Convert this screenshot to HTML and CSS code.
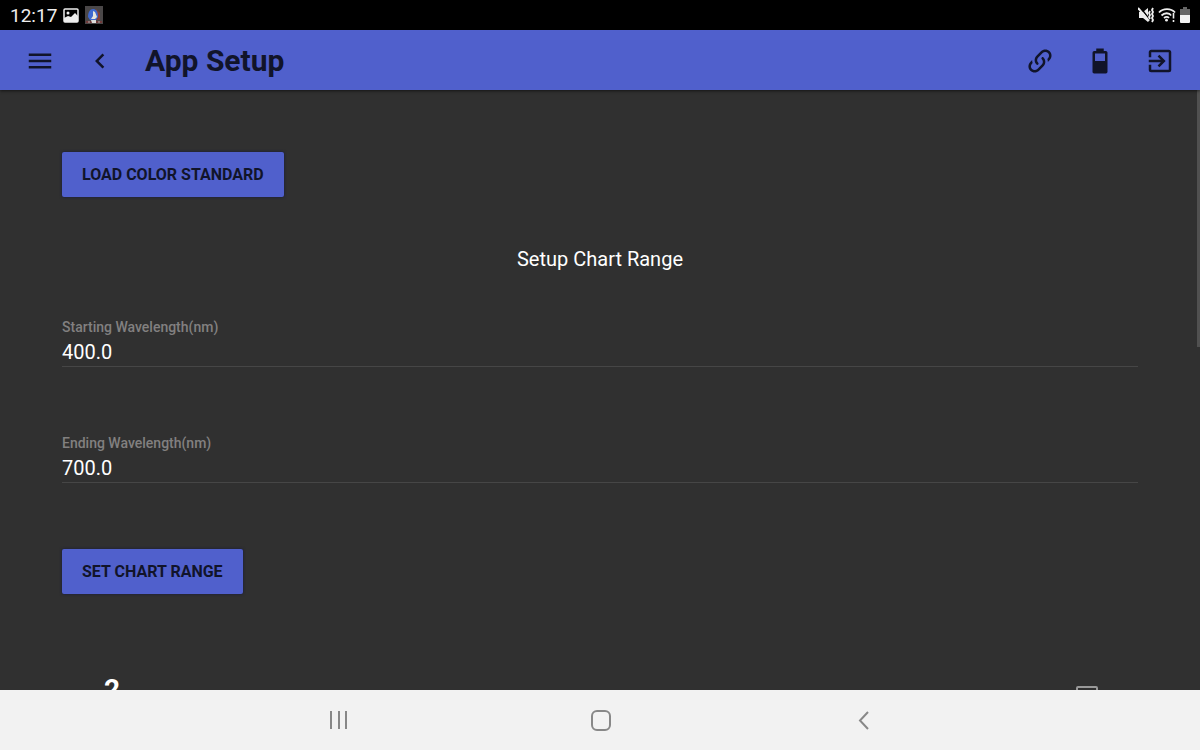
FILE: index.html
```html
<!DOCTYPE html>
<html lang="en">
<head>
    <meta charset="UTF-8">
    <meta name="viewport" content="width=device-width, initial-scale=1.0">
    <title>App Setup</title>
    <link rel="stylesheet" href="styles.css">
</head>
<body>
    <div class="status-bar">
        <span class="clock">12:17</span>
        <svg class="status-icon" width="16" height="15" viewBox="0 0 16 15">
            <rect x="1" y="1" width="14" height="13" rx="1" fill="none" stroke="#eee" stroke-width="1.5"/>
            <circle cx="5" cy="5" r="1.5" fill="#eee"/>
            <path d="M1 10l4-2 3 1 4-4 3 3v6H1z" fill="#eee"/>
        </svg>
        <svg class="status-icon app-icon" width="18" height="18" viewBox="0 0 18 18">
            <rect width="18" height="18" fill="#4a4748"/>
            <path d="M11 3l4 4v7h-4z" fill="#843f35"/>
            <path d="M3 11c0-5 2-8 5-8s5 2 5 8l-2 3H5z" fill="#3f68d0"/>
            <path d="M8 5l2 1 2 5-2 2H6l2-3z" fill="#e8e5dc"/>
            <path d="M1 15h16v2H1z" fill="#713b3b"/>
            <path d="M3 16h2M7 16h4M13 16h2" stroke="#aaa" stroke-width="1"/>
            <path d="M6 14h5v3H7z" fill="#ddd"/>
        </svg>
        <div class="status-right">
            <svg width="17" height="16" viewBox="0 0 17 16">
                <path d="M1 5h4l5-4v14l-5-4H1z" fill="#eee"/>
                <path d="M2 0l10 13" stroke="#000" stroke-width="1.5"/>
                <path d="M0 1l11 13" stroke="#eee" stroke-width="2"/>
                <path d="M12 4l-1 2 1 2-1 2 1 2M15 1l-1 2 1 2-1 2 1 2-1 2 1 2-1 2" fill="none" stroke="#eee" stroke-width="1.8"/>
            </svg>
            <svg width="18" height="16" viewBox="0 0 18 16">
                <path d="M1 5.5c4-4.500 12-4.500 16 0M3.500 8.500c3-3 7.500-3 10 0M6 11c2-1.600 3.500-1.600 5 0" fill="none" stroke="#eee" stroke-width="1.8"/>
                <circle cx="8.500" cy="13.200" r="1.400" fill="#eee"/>
                <path d="M15.500 6v10" stroke="#000" stroke-width="4"/>
                <path d="M15.500 6v5.500M15.500 13v2" stroke="#eee" stroke-width="1.600"/>
            </svg>
            <svg width="12" height="16" viewBox="0 0 12 16">
                <path d="M4 0h4v2h3v6H1V2h3z" fill="#666"/>
                <path d="M1 8h10v7q0 1-1 1H2q-1 0-1-1z" fill="#f2f2f2"/>
            </svg>
        </div>
    </div>
    <header class="toolbar">
        <button class="icon-button" aria-label="Menu">
            <svg viewBox="0 0 24 24"><path d="M3 6h18v2H3zM3 11h18v2H3zM3 16h18v2H3z"/></svg>
        </button>
        <button class="icon-button" aria-label="Back">
            <svg viewBox="0 0 24 24"><path d="M15.410 16.580L10.830 12l4.580-4.590L14 6l-6 6 6 6z"/></svg>
        </button>
        <h1 class="title">App Setup</h1>
        <button class="icon-button" aria-label="Connection">
            <svg viewBox="0 0 24 24"><path d="M10.590,13.410C11,13.800 11,14.440 10.590,14.830C10.200,15.220 9.560,15.220 9.170,14.830C7.220,12.880 7.220,9.710 9.170,7.760V7.760L12.710,4.220C14.660,2.270 17.830,2.270 19.780,4.220C21.730,6.170 21.730,9.340 19.780,11.290L18.290,12.780C18.300,11.960 18.170,11.140 17.890,10.360L18.360,9.880C19.540,8.710 19.540,6.810 18.360,5.640C17.190,4.460 15.290,4.460 14.120,5.640L10.590,9.170C9.410,10.340 9.410,12.240 10.590,13.410M13.410,9.170C13.800,8.780 14.440,8.780 14.830,9.170C16.780,11.120 16.780,14.290 14.830,16.240V16.240L11.290,19.780C9.340,21.730 6.170,21.730 4.220,19.780C2.270,17.830 2.270,14.660 4.220,12.710L5.710,11.220C5.700,12.040 5.830,12.860 6.110,13.650L5.640,14.120C4.460,15.290 4.460,17.190 5.640,18.360C6.810,19.540 8.710,19.540 9.880,18.360L13.410,14.830C14.590,13.660 14.590,11.760 13.410,10.590C13,10.200 13,9.560 13.410,9.170Z"/></svg>
        </button>
        <button class="icon-button" aria-label="Battery">
            <svg viewBox="0 0 24 24"><path d="M16,12H8V6H16M16.670,4H15V2H9V4H7.330A1.330,1.330 0 0,0 6,5.330V20.670C6,21.400 6.600,22 7.330,22H16.670A1.330,1.330 0 0,0 18,20.670V5.330C18,4.600 17.400,4 16.670,4Z"/></svg>
        </button>
        <button class="icon-button" aria-label="Exit">
            <svg viewBox="0 0 24 24"><path d="M19,3H5C3.890,3 3,3.890 3,5V9H5V5H19V19H5V15H3V19A2,2 0 0,0 5,21H19A2,2 0 0,0 21,19V5C21,3.890 20.100,3 19,3M10.080,15.580L11.500,17L16.500,12L11.500,7L10.080,8.410L12.670,11H3V13H12.670L10.080,15.580Z"/></svg>
        </button>
    </header>
    <main class="content">
        <button class="button">LOAD COLOR STANDARD</button>
        <h2 class="section-title">Setup Chart Range</h2>
        <div class="field">
            <label for="start">Starting Wavelength(nm)</label>
            <input id="start" type="text" value="400.0">
        </div>
        <div class="field">
            <label for="end">Ending Wavelength(nm)</label>
            <input id="end" type="text" value="700.0">
        </div>
        <button class="button">SET CHART RANGE</button>
        <div class="option-row">
            <label for="option">2</label>
            <input id="option" type="checkbox">
        </div>
        <div class="scroll-thumb"></div>
    </main>
    <nav class="nav-bar">
        <button class="nav-button" aria-label="Recent apps">
            <svg viewBox="0 0 24 24"><path d="M4 3v18M12 3v18M19 3v18"/></svg>
        </button>
        <button class="nav-button" aria-label="Home">
            <svg viewBox="0 0 24 24"><rect x="3" y="3" width="18" height="19" rx="5"/></svg>
        </button>
        <button class="nav-button" aria-label="Back">
            <svg viewBox="0 0 24 24"><path d="M17 4l-8 8.500 8 8.500"/></svg>
        </button>
    </nav>
</body>
</html>
```

FILE: styles.css
```css
* {
    box-sizing: border-box;
}
body {
    font-family: Roboto, sans-serif;
    display: flex;
    flex-direction: column;
    height: 100vh;
    margin: 0;
    background: #303030;
    color: #fff;
    overflow: hidden;
}
button {
    font-family: inherit;
    border: none;
    padding: 0;
    cursor: pointer;
}
.status-bar {
    display: flex;
    align-items: center;
    height: 30px;
    padding: 0 9px 0 10px;
    background: #000;
    flex-shrink: 0;
}
.clock {
    font-size: 19px;
    line-height: 30px;
    padding-top: 2px;
    color: #eee;
}
.status-icon {
    margin-left: 6px;
}
.status-right {
    display: flex;
    gap: 3px;
    margin-left: auto;
}
.toolbar {
    display: flex;
    align-items: center;
    height: 60px;
    padding: 2px 10px 0;
    background: #5060cc;
    color: #11142a;
    box-shadow: 0 1px 3px rgba(0, 0, 0, 0.6);
    flex-shrink: 0;
    z-index: 1;
}
.icon-button {
    display: flex;
    align-items: center;
    justify-content: center;
    width: 60px;
    height: 58px;
    background: none;
    color: inherit;
}
.icon-button svg {
    width: 30px;
    height: 30px;
    fill: currentColor;
}
.title {
    flex: 1;
    margin: 0 0 0 15px;
    font-size: 30px;
    line-height: 56px;
    font-weight: bold;
}
.content {
    position: relative;
    flex: 1;
    min-height: 0;
    padding: 62px 62px 0;
    overflow: hidden;
}
.button {
    display: block;
    height: 45px;
    padding: 0 20px 1px;
    border-radius: 2px;
    background: #5060cc;
    color: #11142a;
    font-size: 16px;
    font-weight: bold;
    box-shadow: 0 0 3px #14193c;
}
.section-title {
    margin: 48px 0 44px;
    font-size: 20px;
    line-height: 28px;
    font-weight: normal;
    text-align: center;
}
.field {
    display: flex;
    flex-direction: column;
    margin-bottom: 66px;
}
.field label {
    font-size: 14px;
    line-height: 20px;
    font-weight: 500;
    color: #828080;
}
.field input {
    height: 30px;
    padding: 0;
    border: none;
    border-bottom: 1px solid #464646;
    background: none;
    color: #fff;
    font-family: inherit;
    font-size: 20px;
    outline: none;
}
.option-row {
    display: flex;
    align-items: flex-end;
    justify-content: space-between;
    margin-top: 78px;
    padding: 0 40px 0 42px;
}
.option-row label {
    font-size: 28px;
    line-height: 36px;
    font-weight: bold;
}
.option-row input {
    appearance: none;
    width: 22px;
    height: 22px;
    margin: 0;
    border: 2px solid #999;
    border-radius: 2px;
}
.scroll-thumb {
    position: absolute;
    top: 0;
    right: 0;
    width: 3px;
    height: 257px;
    background: #505050;
}
.nav-bar {
    display: flex;
    align-items: center;
    justify-content: center;
    height: 60px;
    padding: 3px 0 0 2px;
    background: #f2f2f2;
    flex-shrink: 0;
}
.nav-button {
    width: 262px;
    height: 57px;
    background: none;
}
.nav-button svg {
    width: 24px;
    height: 24px;
    fill: none;
    stroke: #888;
    stroke-width: 2;
}
```
